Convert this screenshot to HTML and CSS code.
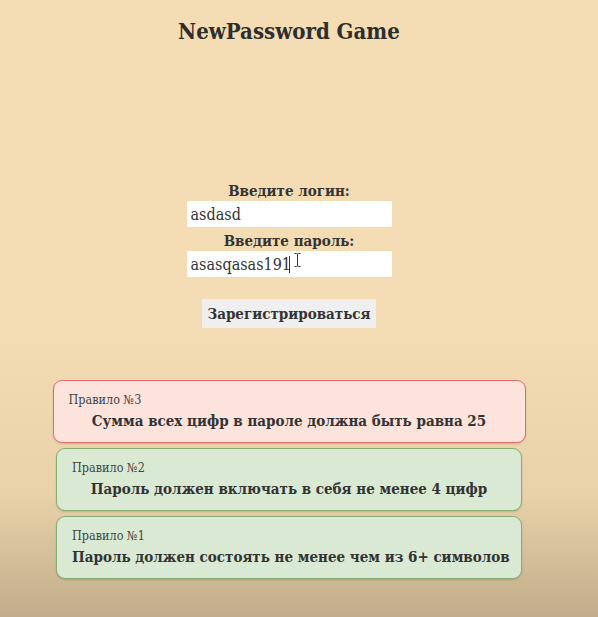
FILE: index.html
```html
<!DOCTYPE html>
<html lang="ru">
<head>
<meta charset="utf-8">
<link rel="stylesheet" href="styles.css">
</head>
<body>
<div class="page">
  <h1 class="title">NewPassword Game</h1>
  <form class="form">
    <label class="label">Введите логин:</label>
    <input class="field" type="text" value="asdasd">
    <label class="label">Введите пароль:</label>
    <div class="field-wrap">
      <input class="field" type="text" value="asasqasas191">
      <span class="caret"></span>
      <svg class="ibeam" width="7" height="14" viewBox="0 0 7 14"><path d="M0.5 0.5 H2.5 Q3.5 0.5 3.5 1.5 V12.5 Q3.5 13.5 2.5 13.5 H0.5 M6.5 0.5 H4.5 Q3.5 0.5 3.5 1.5 M3.5 12.5 Q3.5 13.5 4.5 13.5 H6.5" fill="none" stroke="#333" stroke-width="1"/></svg>
    </div>
    <button class="btn" type="button">Зарегистрироваться</button>
  </form>
  <div class="rules">
    <div class="rule bad">
      <div class="rule-name">Правило №3</div>
      <div class="rule-text">Сумма всех цифр в пароле должна быть равна 25</div>
    </div>
    <div class="rule ok">
      <div class="rule-name">Правило №2</div>
      <div class="rule-text">Пароль должен включать в себя не менее 4 цифр</div>
    </div>
    <div class="rule ok">
      <div class="rule-name">Правило №1</div>
      <div class="rule-text">Пароль должен состоять не менее чем из 6+ символов</div>
    </div>
  </div>
</div>
</body>
</html>
```
FILE: styles.css
```css
html, body {
  margin: 0;
  height: 100%;
}
body {
  background: linear-gradient(to bottom, #f4ddb4 0%, #f3dcb3 55%, #e9d2a9 80%, #c1ad8b 100%);
  font-family: "DejaVu Serif Condensed", "DejaVu Serif", serif;
  font-stretch: condensed;
  color: #2b2b2b;
  overflow: hidden;
}
.page {
  display: flex;
  flex-direction: column;
  align-items: center;
  padding-right: 20px;
}
.title {
  margin: 18px 0 0;
  font-size: 22px;
  font-weight: bold;
  color: #2e2e2e;
}
.form {
  margin-top: 137px;
  display: flex;
  flex-direction: column;
  align-items: center;
}
.label {
  font-size: 15px;
  font-weight: bold;
  color: #333;
  line-height: 20px;
}
.field-wrap {
  position: relative;
}
.field {
  width: 205px;
  height: 26px;
  box-sizing: border-box;
  border: none;
  background: #fff;
  padding: 0 4px;
  font-family: "DejaVu Serif Condensed", "DejaVu Serif", serif;
  font-stretch: condensed;
  font-size: 16px;
  color: #333;
  margin-bottom: 4px;
  outline: none;
}
.caret {
  position: absolute;
  left: 102px;
  top: 5px;
  width: 1px;
  height: 17px;
  background: #333;
}
.ibeam {
  position: absolute;
  left: 107px;
  top: 2px;
}
.btn {
  margin-top: 18px;
  width: 174px;
  height: 29px;
  background: #efefef;
  border: none;
  font-family: "DejaVu Serif Condensed", "DejaVu Serif", serif;
  font-stretch: condensed;
  font-weight: bold;
  font-size: 15px;
  color: #333;
  padding: 0;
}
.rules {
  margin-top: 52px;
  display: flex;
  flex-direction: column;
  align-items: center;
  gap: 5px;
}
.rule {
  box-sizing: border-box;
  width: 466px;
  height: 63px;
  border-radius: 9px;
  padding: 11px 15px 0;
  box-shadow: 0 1px 2px rgba(0,0,0,0.15);
}
.bad {
  width: 473px;
  background: #fce3dc;
  border: 1.5px solid #dd6f6a;
}
.ok {
  background: #d9e9d3;
  border: 1.5px solid #86ad72;
}
.rule-name {
  font-size: 12.5px;
  color: #444;
  line-height: 16px;
}
.rule-text {
  text-align: center;
  font-size: 15px;
  font-weight: bold;
  color: #333;
  line-height: 26px;
  white-space: nowrap;
}
```
